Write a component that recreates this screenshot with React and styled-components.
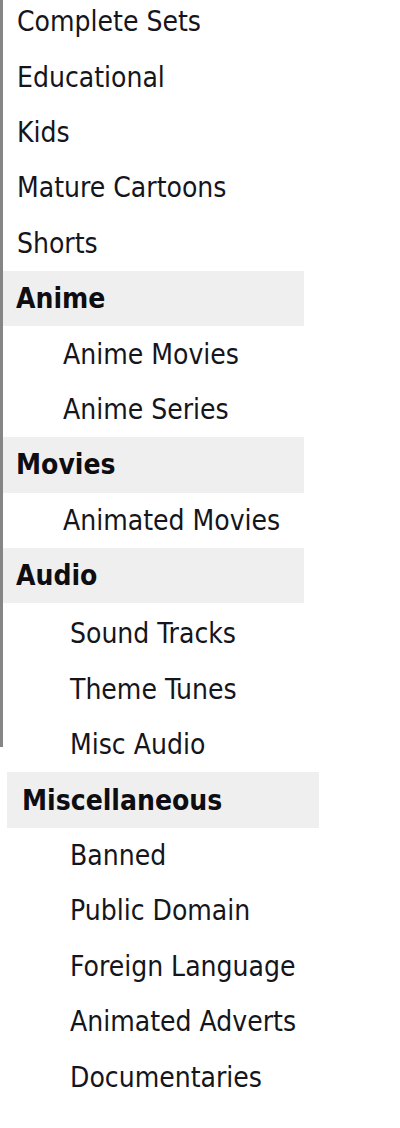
import React from "react";
import styled, { createGlobalStyle } from "styled-components";

const Global = createGlobalStyle`
  html, body { margin: 0; padding: 0; background: #ffffff; }
  body { font-family: "DejaVu Sans Condensed", "DejaVu Sans", Tahoma, sans-serif; color: #15151c; }
`;

const Nav = styled.nav`
  margin-top: -6px;
  display: flex;
  flex-direction: column;
`;

const LinedBlock = styled.div`
  display: flex;
  flex-direction: column;
  padding-left: 3px;
  background: linear-gradient(#858585, #858585) left top / 3px calc(100% - 25px) no-repeat;
`;

const MiscBlock = styled.div`
  display: flex;
  flex-direction: column;
  margin-left: 7px;
`;

const SubGroup = styled.div`
  display: flex;
  flex-direction: column;
  margin-top: ${(p) => p.$offset || 0}px;
`;

const Row = styled.a`
  display: flex;
  align-items: center;
  height: 55.4px;
  box-sizing: border-box;
  padding-left: ${(p) => p.$indent}px;
  font-size: 28px;
  color: #15151c;
  text-decoration: none;
  white-space: nowrap;
`;

const Header = styled.div`
  display: flex;
  align-items: center;
  height: 55.4px;
  width: ${(p) => p.$width}px;
  box-sizing: border-box;
  padding-left: ${(p) => p.$indent}px;
  background: #efefef;
  font-size: 28px;
  font-weight: bold;
  color: #0d0d12;
  white-space: nowrap;
`;

const topItems = ["Complete Sets", "Educational", "Kids", "Mature Cartoons", "Shorts"];

export default function App() {
  return (
    <>
      <Global />
      <Nav>
        <LinedBlock>
          {topItems.map((t) => (
            <Row key={t} $indent={14}>{t}</Row>
          ))}
          <Header $width={301} $indent={13}>Anime</Header>
          <Row $indent={60}>Anime Movies</Row>
          <Row $indent={60}>Anime Series</Row>
          <Header $width={301} $indent={13}>Movies</Header>
          <Row $indent={60}>Animated Movies</Row>
          <Header $width={301} $indent={13}>Audio</Header>
          <SubGroup $offset={3}>
            <Row $indent={67}>Sound Tracks</Row>
            <Row $indent={67}>Theme Tunes</Row>
            <Row $indent={67}>Misc Audio</Row>
          </SubGroup>
        </LinedBlock>
        <MiscBlock>
          <Header $width={312} $indent={15}>Miscellaneous</Header>
          {["Banned", "Public Domain", "Foreign Language", "Animated Adverts", "Documentaries"].map((t) => (
            <Row key={t} $indent={63}>{t}</Row>
          ))}
        </MiscBlock>
      </Nav>
    </>
  );
}
